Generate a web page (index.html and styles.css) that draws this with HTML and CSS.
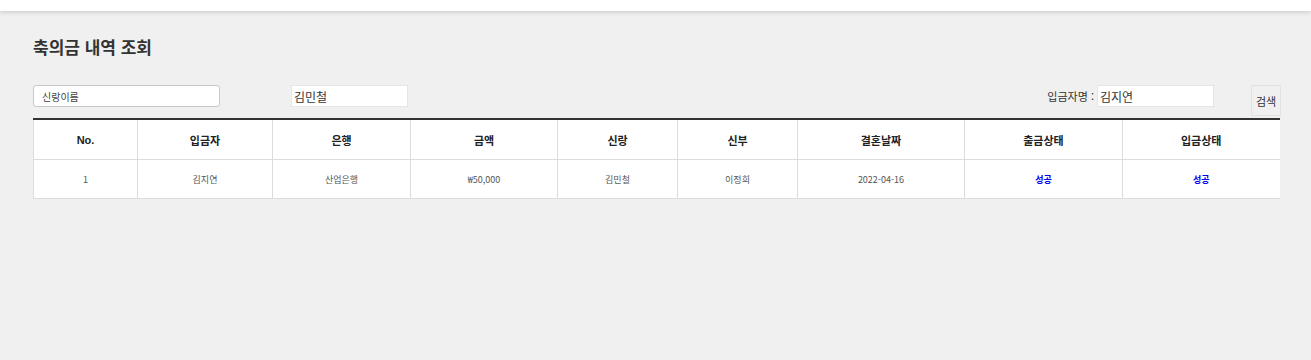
FILE: index.html
```html
<!DOCTYPE html>
<html lang="ko">
<head>
    <meta charset="UTF-8">
    <meta name="viewport" content="width=device-width, initial-scale=1.0">
    <title>축의금 내역 조회</title>
    <link rel="stylesheet" href="styles.css">
</head>
<body>
    <div class="topbar"></div>

    <div class="content">
        <h1>축의금 내역 조회</h1>

        <div class="search-row">
            <div class="search-left">
                <input type="text" class="groom-input" placeholder="신랑이름">
                <input type="text" class="plain-input" value="김민철">
            </div>
            <div class="search-right">
                <label for="sender">입금자명 :</label>
                <input type="text" id="sender" class="plain-input" value="김지연">
                <button class="search-btn">검색</button>
            </div>
        </div>

        <table class="list">
            <colgroup>
                <col style="width: 104px">
                <col style="width: 135px">
                <col style="width: 138px">
                <col style="width: 147px">
                <col style="width: 120px">
                <col style="width: 120px">
                <col style="width: 167px">
                <col style="width: 158px">
                <col style="width: 157px">
            </colgroup>
            <thead>
                <tr>
                    <th class="num">No.</th>
                    <th>입금자</th>
                    <th>은행</th>
                    <th>금액</th>
                    <th>신랑</th>
                    <th>신부</th>
                    <th>결혼날짜</th>
                    <th>출금상태</th>
                    <th>입금상태</th>
                </tr>
            </thead>
            <tbody>
                <tr>
                    <td>1</td>
                    <td>김지연</td>
                    <td>산업은행</td>
                    <td>₩50,000</td>
                    <td>김민철</td>
                    <td>이정희</td>
                    <td>2022-04-16</td>
                    <td class="ok">성공</td>
                    <td class="ok">성공</td>
                </tr>
            </tbody>
        </table>
    </div>
</body>
</html>
```

FILE: styles.css
```css
body {
    margin: 0;
    background: #f0f0f0;
    font-family: "Noto Sans CJK KR", "Liberation Sans", sans-serif;
    color: #333;
    min-height: 360px;
}
.topbar {
    height: 11px;
    background: #fff;
    box-shadow: 0 1px 5px rgba(0,0,0,0.18);
}
.content {
    padding: 0 30px 0 33px;
}
h1 {
    margin: 22px 0 0;
    font-size: 17px;
    line-height: 28px;
    font-weight: bold;
    color: #333;
}
.search-row {
    display: flex;
    justify-content: space-between;
    align-items: flex-start;
    margin-top: 24px;
    height: 33px;
}
.search-left, .search-right {
    display: flex;
    align-items: flex-start;
}
input {
    font-family: "Noto Sans CJK KR", sans-serif;
    box-sizing: border-box;
    height: 22px;
    margin: 0;
    outline: none;
}
.groom-input {
    width: 187px;
    padding: 0 8px;
    font-size: 10px;
    border: 1px solid #c8c8c8;
    border-radius: 3px;
    background: #fff;
}
.groom-input::placeholder { color: #444; }
.plain-input {
    width: 117px;
    padding: 0 2px;
    font-size: 12px;
    color: #333;
    border: 1px solid #e6e6e6;
    background: #fff;
}
.search-left .plain-input { margin-left: 71px; }
.search-right label {
    font-size: 11px;
    line-height: 22px;
    margin-right: 3px;
    color: #333;
}
.search-btn {
    margin-left: 37px;
    width: 30px;
    height: 31px;
    padding: 0;
    font-family: "Noto Sans CJK KR", sans-serif;
    font-size: 11px;
    color: #333;
    background: #f0f0f0;
    border: 1px solid #e2e2e2;
}
.list {
    width: 1246px;
    table-layout: fixed;
    border-collapse: collapse;
    background: #fff;
    border-top: 2px solid #333;
}
.list th, .list td {
    border: 1px solid #dcdcdc;
    text-align: center;
    padding: 0;
}
.list tr > :last-child { border-right: none; }
.list th {
    height: 39px;
    font-size: 11px;
    font-weight: bold;
    color: #222;
}
.list th.num { font-family: "Liberation Sans", sans-serif; }
.list td {
    height: 38px;
    font-size: 9px;
    color: #555;
}
.list td.ok {
    color: #0000ee;
    font-weight: bold;
}
```
